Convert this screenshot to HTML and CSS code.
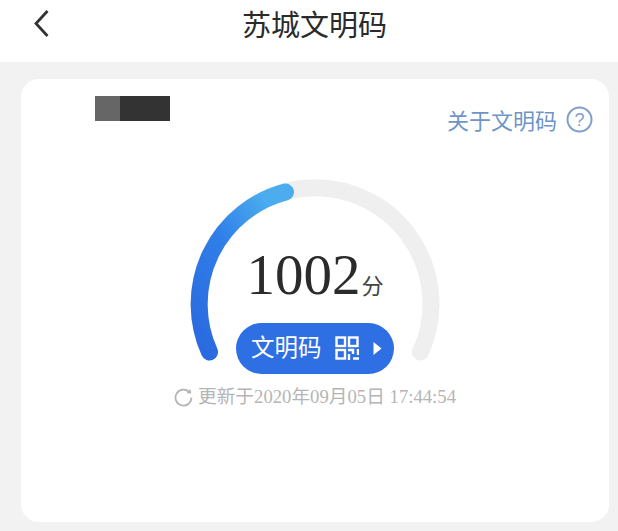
FILE: index.html
```html
<!DOCTYPE html>
<html lang="zh-CN">
<head>
<meta charset="UTF-8">
<meta name="viewport" content="width=device-width, initial-scale=1.0">
<title>苏城文明码</title>
<link rel="stylesheet" href="styles.css">
</head>
<body>
<header class="top-bar">
  <svg class="back" width="16" height="30" viewBox="0 0 16 30"><path d="M14.5 1 L3 13.5 L14.5 26" fill="none" stroke="#333" stroke-width="2.8"/></svg>
  <h1>苏城文明码</h1>
</header>
<main class="card">
  <div class="card-head">
    <div class="mask"><span class="mask-left"></span><span class="mask-right"></span></div>
    <a class="about">关于文明码
      <svg width="27" height="27" viewBox="0 0 27 27"><circle cx="13.5" cy="13.5" r="12" fill="none" stroke="#7f9fcb" stroke-width="2"/><text x="13.5" y="20" text-anchor="middle" class="help-mark">?</text></svg>
    </a>
  </div>
  <div class="gauge">
    <svg class="gauge-arc" width="250" height="186" viewBox="0 0 250 186">
      <defs>
        <linearGradient id="arcBlue" x1="0" y1="1" x2="0.7" y2="0">
          <stop offset="0" stop-color="#2a69df"/>
          <stop offset="0.6" stop-color="#2f7fe8"/>
          <stop offset="1" stop-color="#4bacee"/>
        </linearGradient>
      </defs>
      <path d="M19.5 173 A116 116 0 1 1 230.5 173" fill="none" stroke="#efefef" stroke-width="17" stroke-linecap="round"/>
      <path d="M19.5 173 A116 116 0 0 1 95.5 13" fill="none" stroke="url(#arcBlue)" stroke-width="17" stroke-linecap="round"/>
    </svg>
    <div class="gauge-body">
      <div class="score">1002<span class="unit">分</span></div>
      <div class="code-btn">
        <span class="code-label">文明码</span>
        <svg class="qr" width="24" height="24" viewBox="0 0 24 24" fill="none" stroke="#fff" stroke-width="2.4">
          <rect x="1.5" y="1.5" width="8.5" height="8.5"/><rect x="14" y="1.5" width="8.5" height="8.5"/><rect x="1.5" y="14" width="8.5" height="8.5"/>
          <path d="M13 14h5v4M23 13v6M14 18v6M18 22.5h6"/>
        </svg>
        <svg width="9" height="13" viewBox="0 0 9 13"><path d="M0.5 0 L8.5 6.5 L0.5 13 Z" fill="#fff"/></svg>
      </div>
    </div>
  </div>
  <div class="updated">
    <svg width="19" height="19" viewBox="0 0 19 19"><path d="M15.6 4.4 A8 8 0 1 0 17.5 9.5" fill="none" stroke="#b3b3b3" stroke-width="1.7"/><path d="M12.6 5.2 L17.2 5.6 L16.4 1 Z" fill="#b3b3b3"/></svg>
    <span>更新于2020年09月05日 17:44:54</span>
  </div>
</main>
</body>
</html>
```
FILE: styles.css
```css
body {
  margin: 0;
  height: 531px;
  overflow: hidden;
  background-color: #f2f2f2;
  font-family: "Noto Sans CJK SC", "Liberation Sans", sans-serif;
}
.top-bar {
  display: flex;
  align-items: center;
  height: 62px;
  padding: 0 0 12px 33px;
  box-sizing: border-box;
  background-color: #fff;
}
.top-bar h1 {
  margin: 0 0 4px 193px;
  font-size: 29px;
  font-weight: 400;
  color: #2a2a2a;
  line-height: 36px;
}
.back {
  flex: none;
}
.card {
  width: 588px;
  height: 443px;
  margin: 17px 0 0 21px;
  padding: 17px 16px 0 74px;
  box-sizing: border-box;
  background-color: #fff;
  border-radius: 18px;
}
.card-head {
  display: flex;
  justify-content: space-between;
  align-items: flex-start;
}
.mask {
  display: flex;
  height: 25px;
}
.mask-left {
  width: 25px;
  background-color: #666;
}
.mask-right {
  width: 50px;
  background-color: #333;
}
.about {
  display: flex;
  align-items: center;
  gap: 9px;
  margin-top: 10px;
  font-size: 22px;
  line-height: 27px;
  color: #6f95c8;
}
.help-mark {
  font-family: "Liberation Sans", sans-serif;
  font-size: 18px;
  fill: #7f9fcb;
}
.gauge {
  display: grid;
  width: 250px;
  height: 196px;
  margin: 46px 0 0 95px;
}
.gauge-arc,
.gauge-body {
  grid-area: 1 / 1;
}
.gauge-body {
  display: flex;
  flex-direction: column;
  align-items: center;
  padding-top: 60px;
}
.score {
  font-family: "Liberation Serif", serif;
  font-size: 57px;
  line-height: 72px;
  color: #2b2b2b;
}
.unit {
  margin-left: 1px;
  font-family: "Noto Sans CJK SC", sans-serif;
  font-size: 22px;
  color: #444;
}
.code-btn {
  display: flex;
  align-items: center;
  width: 158px;
  height: 51px;
  margin-top: 3px;
  padding-left: 15px;
  box-sizing: border-box;
  border-radius: 26px;
  background-color: #2f6fe4;
  color: #fff;
  font-size: 23.5px;
}
.code-label {
  margin-bottom: 5px;
}
.qr {
  margin: 0 14px 2px 13px;
}
.updated {
  display: flex;
  align-items: center;
  gap: 5px;
  margin: 11px 0 0 79px;
  font-family: "Liberation Serif", "Noto Sans CJK SC", serif;
  font-size: 18.7px;
  line-height: 22px;
  color: #b5b5b5;
  white-space: nowrap;
}
```
